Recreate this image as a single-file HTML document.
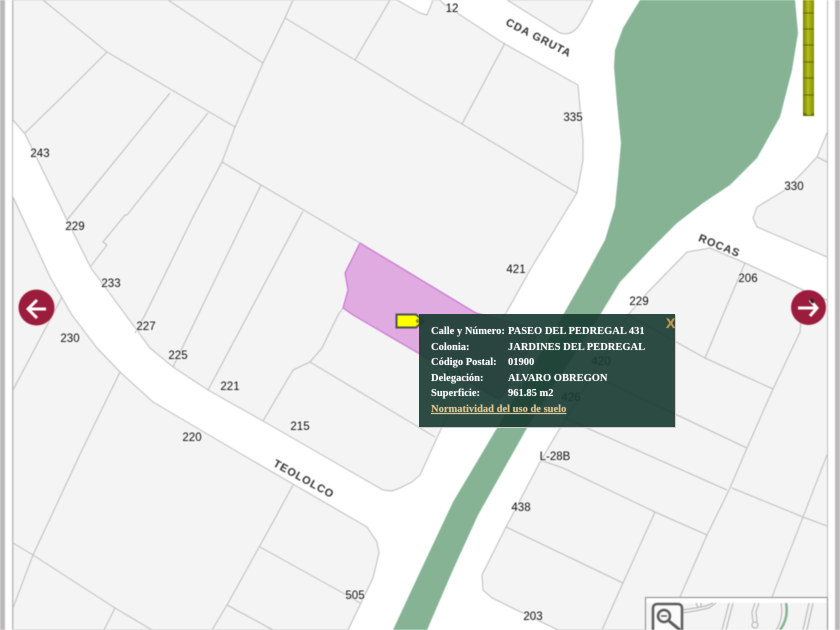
<!DOCTYPE html>
<html><head><meta charset="utf-8">
<style>
html,body{margin:0;padding:0;background:#fff;width:840px;height:630px;overflow:hidden}
#wrap{position:relative;width:840px;height:630px;overflow:hidden}
svg{position:absolute;left:0;top:0;filter:blur(.4px)}
.n{font:11.5px "Liberation Sans",sans-serif;fill:#000;text-anchor:middle;paint-order:stroke;stroke:#fff;stroke-width:1.5px}
.s{font:bold 11px "Liberation Sans",sans-serif;fill:#333;text-anchor:middle;letter-spacing:.8px}
#pop{position:absolute;left:419px;top:314px;width:256px;height:113px;background:rgba(26,60,50,.92);box-shadow:1px 1px 0 #ccc;font:bold 10.5px/15.5px "Liberation Serif",serif;color:#fff;text-shadow:0 0 1px rgba(255,255,255,.4)}
#pop div{position:absolute;white-space:nowrap}
#pop a{color:#e2c48a;text-decoration:underline}
</style></head><body><div id="wrap">
<svg width="840" height="630" viewBox="0 0 840 630" xmlns="http://www.w3.org/2000/svg">
<defs><linearGradient id="g" x1="0" x2="1" y1="0" y2="0"><stop offset="0" stop-color="#747e00"/><stop offset=".45" stop-color="#b4be20"/><stop offset="1" stop-color="#848e00"/></linearGradient></defs>
<rect width="840" height="630" fill="#fff"/>
<g fill="#f4f4f4" stroke="#bdbdbd" stroke-width="1">
<polygon points="13,120 25,134 67,220 91,268 125,314 150,348 173,367 208,390 263,421 383,490 392,491 400,488 412,482 420,475 442,427 505,315 530,270 577,193 583,160 583,140 578,85 503,43 445,5 440,0 433,0 427,15 420,13 397,0 13,0"/>
<path d="M507,0 L560,33 Q570,36 577,28 Q582,22 593,0 Z"/>
<polygon points="13,197 33,240 50,277 72,315 97,348 120,372 153,402 243,455 367,527 377,542 379,553 373,578 348,630 13,630"/>
<polygon points="827,133 817,157 803,172 785,190 757,207 753,218 757,227 827,257 840,262 840,130"/>
<polygon points="827,300 803,290 745,263 710,248 687,252 647,293 628,315 560,428 540,462 506,527 482,575 483,590 492,598 558,630 840,630 840,300"/>
</g>
<polygon points="360,243 345,273 348,290 343,308 353,315 418,353 500,400 540,330 476,313" fill="#dfabe0" stroke="#c766cf" stroke-width="1"/>
<g fill="none" stroke="#bdbdbd" stroke-width="1">
<path d="M43,0L107,52L235,127M168,0L263,63M293,0L285,18L263,63L235,127L222,162L193,217L145,315L135,333"/>
<path d="M261,185L198,315L173,367M303,211L248,315L208,390M343,308L338,315L322,348L310,362L293,370L263,421"/>
<path d="M285,18L355,60L420,100L462,124L577,193M355,60L390,0M462,124L505,43M222,162L360,243"/>
<path d="M107,52L67,92L25,133M170,93L110,167L67,220M208,113L127,215L125,215L103,242L107,245L91,266"/>
<path d="M310,362L420,428L435,437M62,297L13,390M120,372L83,448L33,555L13,608M13,543L33,555L115,608L152,630M115,608L104,630"/>
<path d="M293,485L273,522L227,605L212,630M260,547L343,593L360,603M227,605L273,630"/>
<path d="M628,315L705,358L773,389M803,290L800,332L773,389L747,448L730,488L707,535L680,597L662,630M705,358L723,315L745,263"/>
<path d="M592,375L677,415L747,448M563,417L587,428L727,490M540,460L563,468L655,512L707,535M655,512L623,583L602,630M506,527L623,583"/>
<path d="M732,488L803,517L827,526M827,455L803,517L772,597L760,630M817,157L827,162"/>
</g>
<path d="M640,0L623,28L615,50L614,67L617,103L621,143L618,177L615,207L605,240L587,273L563,315L497,428L453,502L420,572L393,630L427,630L452,572L478,515L527,428L600,315L620,282L650,250L677,223L703,203L730,185L757,158L780,117L792,70L798,33L795,0Z" fill="#85b394"/>
<g class="n">
<text class="n" x="452" y="12">12</text>
<text class="n" x="573" y="121">335</text>
<text class="n" x="40" y="157">243</text>
<text class="n" x="75" y="230">229</text>
<text class="n" x="111" y="287">233</text>
<text class="n" x="516" y="273">421</text>
<text class="n" x="794" y="190">330</text>
<text class="n" x="748" y="282">206</text>
<text class="n" x="639" y="305">229</text>
<text class="n" x="146" y="330">227</text>
<text class="n" x="70" y="342">230</text>
<text class="n" x="178" y="359">225</text>
<text class="n" x="230" y="390">221</text>
<text class="n" x="300" y="430">215</text>
<text class="n" x="192" y="441">220</text>
<text class="n" x="555" y="460">L-28B</text>
<text class="n" x="521" y="511">438</text>
<text class="n" x="355" y="599">505</text>
<text class="n" x="533" y="620">203</text>
<text class="n" x="601" y="365">420</text>
<text class="n" x="571" y="401">426</text>
<text class="n" x="453" y="379">431</text>
</g>
<text class="s" transform="translate(537,41) rotate(27)">CDA GRUTA</text>
<text class="s" transform="translate(718,249) rotate(22)">ROCAS</text>
<text class="s" transform="translate(302,482) rotate(29)">TEOLOLCO</text>
<!-- scale bar -->
<rect x="803" y="0" width="11" height="115" fill="url(#g)"/>
<path d="M803,13H814M803,29H814M803,45H814M803,62H814M803,78H814M803,95H814" stroke="#5f6800" stroke-width="1"/>
<path d="M803,112L808,115H811L814,112V116H803Z" fill="#5f6800"/>
<!-- frame -->
<rect x="0" y="0" width="5" height="630" fill="#bbb9ba"/>
<rect x="5" y="0" width="7" height="630" fill="#fff"/>
<rect x="12" y="0" width="1" height="630" fill="#bbb"/>
<rect x="827" y="0" width="8" height="630" fill="#fff"/>
<rect x="827" y="0" width="1" height="630" fill="#bbb"/>
<rect x="835" y="0" width="5" height="630" fill="#bbb9ba"/>
<!-- arrows -->
<circle cx="36.500" cy="307.500" r="18" fill="#9c1c3d"/>
<path d="M46,309H29M37,300L28,309L37,318" fill="none" stroke="#fff" stroke-width="3"/>
<circle cx="808.500" cy="307.500" r="17.500" fill="#9c1c3d"/>
<path d="M798,308H816M810,300L817,308L810,316" fill="none" stroke="#fff" stroke-width="3"/>
<ellipse cx="812" cy="301" rx="1.6" ry="2.6" fill="#222" transform="rotate(-30 812 301)"/>
<!-- overview map -->
<rect x="645.500" y="597.500" width="182" height="40" fill="#fff" stroke="#8a8a8a"/>
<rect x="646" y="603" width="181" height="27" fill="#f4f4f4"/>
<g fill="none" stroke="#b0b0b0" stroke-width="1">
<path d="M682,610L695,608L706,606L713,603M682,613L695,611L709,608L716,603M698,608L696,603M701,607L701,603"/>
<path d="M729,603L722,630M733,603L726,630"/>
<path d="M755,603L752,612L753,622M759,603L756,612L757,622"/><circle cx="755" cy="625" r="3"/>
<path d="M781,603Q784,618 776,630M809,603L803,630M813,603L807,630"/>
</g>
<path d="M786,603Q789,618 780,630" fill="none" stroke="#85b394" stroke-width="2.500"/>
<rect x="653" y="604" width="29" height="30" rx="4" fill="#fbfbfb" stroke="#5c5c5c" stroke-width="2.500"/>
<circle cx="664" cy="616" r="6" fill="none" stroke="#5c5c5c" stroke-width="2.500"/>
<path d="M661,616H667" stroke="#5c5c5c" stroke-width="1.500"/>
<path d="M669,621L680,630" stroke="#5c5c5c" stroke-width="3"/>
<!-- marker -->
<path d="M396.500,314.500H416L423.500,321L416,327.500H396.500Z" fill="#ffff00" stroke="#4a4f55" stroke-width="2"/>
<circle cx="418" cy="321" r="1.500" fill="#999" stroke="#333" stroke-width=".6"/>
</svg>
<div id="pop">
<div style="left:12px;top:10px">Calle y Número:</div><div style="left:89px;top:10px">PASEO DEL PEDREGAL 431</div>
<div style="left:12px;top:26px">Colonia:</div><div style="left:89px;top:26px">JARDINES DEL PEDREGAL</div>
<div style="left:12px;top:41px">Código Postal:</div><div style="left:89px;top:41px">01900</div>
<div style="left:12px;top:57px">Delegación:</div><div style="left:89px;top:57px">ALVARO OBREGON</div>
<div style="left:12px;top:72px">Superficie:</div><div style="left:89px;top:72px">961.85 m2</div>
<div style="left:12px;top:88px"><a>Normatividad del uso de suelo</a></div>
<div style="left:247px;top:1px;font:bold 14px/16px 'Liberation Sans',sans-serif;color:#c8963e">X</div>
</div>
</div></body></html>
